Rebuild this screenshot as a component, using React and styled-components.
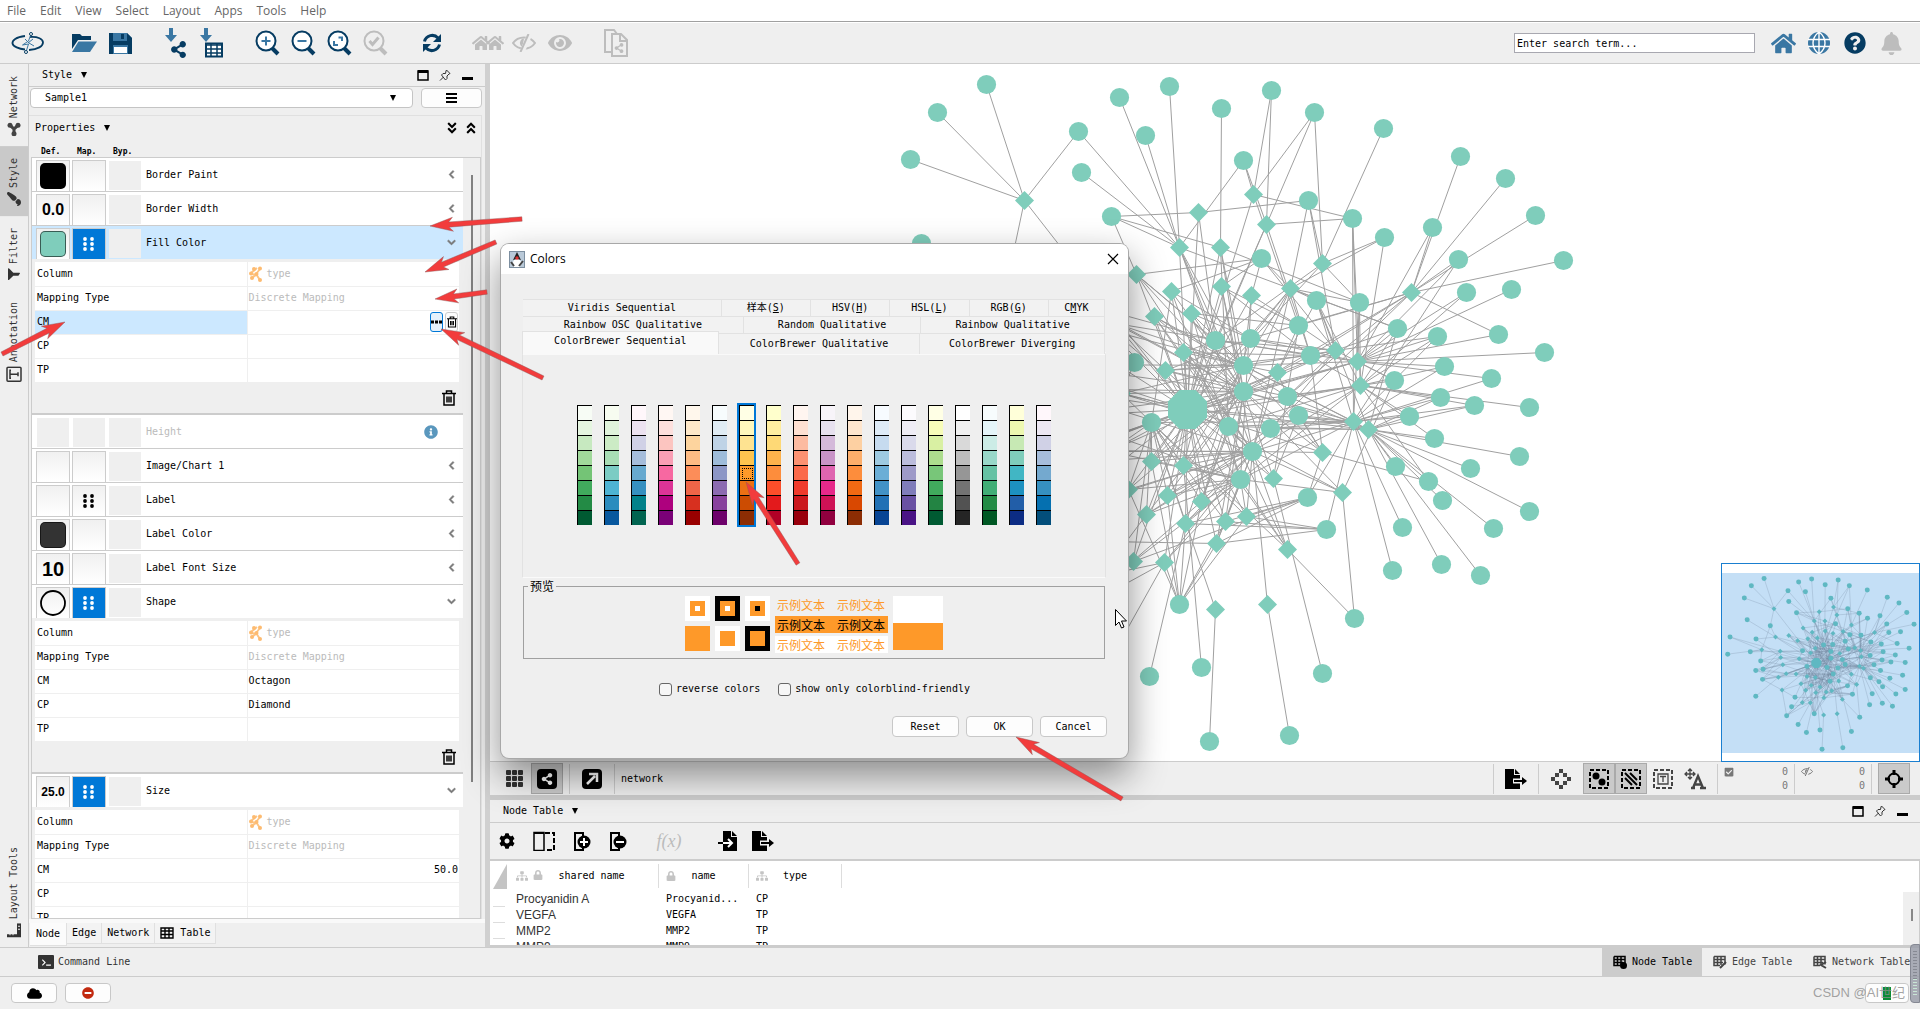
import React from "react";
import styled, { createGlobalStyle, css } from "styled-components";
import {
  FaShareAlt, FaHome, FaQuestionCircle, FaBell,
  FaEye, FaPaintBrush, FaFilter, FaCog, FaLock, FaSitemap, FaCloud, FaMinusCircle,
  FaInfoCircle, FaTerminal, FaCheckSquare, FaChevronLeft, FaChevronDown, FaAngleDoubleDown,
  FaAngleDoubleUp,
} from "react-icons/fa";

const mono = `"DejaVu Sans Mono", "Liberation Mono", "Noto Sans CJK SC", monospace`;
const sans = `"Open Sans", "Noto Sans", sans-serif`;
const cjk = `"Noto Sans CJK SC", sans-serif`;
const NAVY = "#063c62";
const STEEL = "#3a77a3";
const OFF = "#bdbdbd";
const TEAL = "#7fcdbb";
const ORANGE = "#fe9929";

const Global = createGlobalStyle`
  * { box-sizing: border-box; }
  body { margin: 0; overflow: hidden; background: #efefef; color: #000; font: 10px/14px ${mono}; }
  button, input, select { font: inherit; color: inherit; margin: 0; }
  button { padding: 0; border: 0; background: none; display: inline-flex; align-items: center; justify-content: center; }
  svg { display: block; flex: none; }
`;

/* ---------- network data ---------- */
const circles = [
  [986,84],[937,112],[910,159],[1078,131],[1119,97],[1169,86],[1145,135],[1081,172],[1221,108],[1271,90],
  [1314,112],[1383,128],[1243,160],[1111,216],[1308,200],[1352,218],[1460,156],[1505,178],[1535,215],[1563,260],
  [1432,227],[1384,237],[1261,258],[1458,259],[1511,289],[1466,292],[1316,300],[1359,302],[1298,325],[1250,338],
  [1215,340],[1397,328],[1437,336],[1498,334],[1544,352],[1310,355],[1243,365],[1444,366],[1491,378],[1394,380],
  [1134,362],[1243,391],[1287,396],[1440,397],[921,243],[1151,422],[1228,426],[1252,451],[1240,479],[1270,428],
  [1298,415],[1474,405],[1529,407],[1409,416],[1434,438],[1395,466],[1470,468],[1519,456],[1428,481],[1442,500],
  [1307,497],[1326,529],[1402,527],[1493,528],[1529,511],[1392,570],[1441,564],[1480,575],[1354,618],[1179,604],
  [1149,676],[1201,667],[1322,673],[1209,741],[1289,735],[855,309],[846,375],[933,366],[955,317],[1010,266],
  [973,401],[954,438],[982,433],[980,472],[954,537],[1105,541],[1092,577],[1073,612],[1117,646],
];
const diamonds = [
  [1024,200],[1198,212],[1253,194],[1266,224],[1179,247],[1220,247],[1136,274],[1171,291],[1221,286],[1251,295],
  [1290,288],[1322,263],[1411,292],[1154,316],[1191,313],[1183,352],[1165,370],[1335,350],[1357,361],[1360,385],
  [1277,372],[1353,421],[1368,429],[1322,452],[1342,492],[1273,478],[1151,461],[1183,465],[1167,495],[1146,514],
  [1201,501],[1185,523],[1225,521],[1246,516],[1216,543],[1164,562],[1133,561],[1287,549],[1215,609],[1267,604],
  [1128,489],[1030,309],[1081,303],[1115,323],[977,358],[1048,364],[1050,388],[1058,416],[1071,450],[1041,464],
  [1055,513],[1109,451],[1121,393],
];
const hub = [1187, 409];
const links = {
  0: [0,1,2,3,79], 1: [13,14,30], 2: [9,10,12,15,28], 3: [9,10,12,15,30,35],
  4: [3,4,5,6,7,12,13,31,36,41,47,30], 5: [8,13,27,36,41,46], 6: [13,22,36,41,30,47], 7: [29,41,22,48,45],
  8: [22,28,41,47,35], 9: [22,36,28,48], 10: [14,21,22,26,27,29,31,35,36,41,47], 11: [11,14,21,10,30,27],
  12: [16,17,18,19,20,23,33,28,29,35,41,42,49], 13: [36,42,47,41,46], 14: [28,36,41,48,29], 15: [30,36,41,35,49,47],
  16: [29,35,36,42,41], 17: [14,22,26,28,29,30,31,32,35,36,39,41,42,47], 18: [15,20,23,24,25,27,29,30,31,32,33,34,36,37,38,39,41,45],
  19: [15,21,25,26,27,31,32,37,39,43,45,46,47,48,51,52,53,54,58,35,42], 20: [26,28,42,36,47,35],
  21: [23,27,32,36,37,38,41,45,46,47,48,49,50,51,53,60,61,65,62,43,26,15],
  22: [26,36,41,43,46,49,51,53,54,55,56,57,58,59,63,64,66,67,31,42,50], 23: [35,36,41,42,47,58,60,50],
  24: [39,47,48,68,41], 25: [41,46,50,72,28], 26: [36,41,45,47,48,69], 27: [36,47,48,71,30,45],
  28: [41,47,48,69,45,49], 29: [41,47,48,45,87,50], 30: [36,41,45,47,48,69,46,87], 31: [45,47,48,69,70,60,61,29],
  32: [45,47,60,61,69,41], 33: [47,48,60,61,69,45], 34: [41,47,60,61,69,85,48], 35: [47,48,69,86,87,88],
  36: [48,60,45,87], 37: [45,47,48,68,46], 38: [73,45], 39: [74,47], 40: [41,47,48,69,45,85],
  41: [44,78,79,40,36], 42: [40,41,47,30], 43: [36,41,35,47], 44: [75,76,77,80,79], 45: [75,77,80,82,36,41,40],
  46: [80,81,82,83,41,47,78], 47: [80,81,82,83,41,48], 48: [81,82,83,41,47,45], 49: [81,83,84,47,45],
  50: [87,85,47,83], 51: [41,47,48,83,45], 52: [36,41,45,82,46,40],
};
const edges = [
  ...diamonds.filter((_, i) => i !== 12 && i !== 38 && i !== 39).map((d) => [hub, d]),
  ...Object.entries(links).flatMap(([d, list]) => list.map((c) => [diamonds[d], circles[c]])),
];

function Graph({ node = TEAL, edge = "#a0a0a0", thickness = 1 }) {
  return (
    <>
      <path d={edges.map(([a, b]) => `M${a}L${b}`).join("")} stroke={edge} strokeWidth={thickness} fill="none" />
      <g fill={node}>
        {circles.map(([x, y]) => <circle key={`${x}-${y}`} cx={x} cy={y} r="9.6" />)}
        {diamonds.map(([x, y]) => <path key={`${x}-${y}`} d={`M${x} ${y - 9.5}l9.5 9.5l-9.5 9.5l-9.5-9.5z`} />)}
        <path d="M1179 389.500h16l11.500 11.500v16l-11.500 11.500h-16l-11.500-11.500v-16z" />
      </g>
    </>
  );
}

/* ---------- icons ---------- */
const Svg = ({ w = 22, h = w, box = `0 0 ${w} ${h}`, children, ...p }) => (
  <svg width={w} height={h} viewBox={box} fill="none" aria-hidden="true" {...p}>{children}</svg>
);
const Caret = () => <Svg w={8} h={6}><path d="M1 0h6L4 6z" fill="#000" /></Svg>;
const Logo = () => (
  <Svg w={34} h={24}>
    <path d="M14 5C5 6 1 9.500 1.500 12.500S8 18 14 18.500M19 6c8-.5 13 2 13 5.500S27 18.500 18 19" stroke={NAVY} strokeWidth="1.8" />
    <path d="M20 3l-2.500 7-6 4 6-1-2.500 8M14 8l4 4 5 3M22 8l-5 4" stroke={STEEL} strokeWidth="1" />
    <circle cx="20" cy="3" r="1.500" stroke={NAVY} fill="#fff" /><circle cx="15" cy="21" r="1.500" stroke={NAVY} fill="#fff" />
  </Svg>
);
const Folder = () => (
  <Svg w={26} h={20}><path d="M1 1h8l2 2h9v4H7L1 16z" fill={NAVY} /><path d="M7.500 8.500H26L19 19H1z" fill={STEEL} /></Svg>
);
const Disk = () => (
  <Svg w={23} h={22}><path d="M0 1h18l5 5v16H0z" fill={STEEL} /><path d="M0 1h4v8h14V1l5 5v16h-4v-9H4v9H0z" fill={NAVY} />
    <path d="M12 2h3v5h-3z" fill={NAVY} /><path d="M5 15h13v6H5z" fill="#fff" /></Svg>
);
const Arrow = () => <path d="M5 1h4v7h4l-6 7-6-7h4z" fill={STEEL} />;
const ImportNet = () => (
  <Svg w={24} h={32}><Arrow /><g transform="translate(6 14)"><FaShareAlt size={17} color={NAVY} /></g></Svg>
);
const ImportTable = () => (
  <Svg w={26} h={32}><Arrow />
    <rect x="7" y="16.500" width="16" height="13" stroke={NAVY} strokeWidth="2" fill="#fff" />
    <path d="M7 18h16M7 22h16M7 26h16M12 17v12M18 17v12" stroke={NAVY} strokeWidth="1.500" />
  </Svg>
);
const Zoom = ({ kind, off }) => (
  <Svg w={26} h={26}>
    <path d="M17 18l6 6" stroke={off ? OFF : NAVY} strokeWidth="4" />
    <circle cx="11" cy="11" r="9.500" stroke={off ? OFF : NAVY} strokeWidth="2" fill={off ? "none" : "#fff"} />
    {kind === "in" && <path d="M11 6.500v9M6.500 11h9" stroke={STEEL} strokeWidth="2" />}
    {kind === "out" && <path d="M6.500 11h9" stroke={STEEL} strokeWidth="2" />}
    {kind === "fit" && <path d="M11.500 7.500H15V11M7 11v4h4" stroke={STEEL} strokeWidth="2" />}
    {kind === "sel" && <path d="M6.500 11l3 3.500 6-7" stroke={OFF} strokeWidth="3" />}
  </Svg>
);
const HiddenEye = ({ w = 24, color = OFF }) => (
  <Svg w={w} h={(w * 3) / 4} box="0 0 24 18">
    <path d="M1 9C6 1.500 18 1.500 23 9C18 16.500 6 16.500 1 9z" stroke={color} strokeWidth="2" />
    <path d="M12 4.500a4.500 4.500 0 0 0-1.500 8.500z" fill={color} />
    <path d="M18 0L10 18" stroke="#efefef" strokeWidth="5" /><path d="M16.500 0L8.500 18" stroke={color} strokeWidth="2" />
  </Svg>
);
const Refresh = () => (
  <Svg w={20} h={20}>
    <path d="M2.500 8.500C4 2 12 .5 16 5M17.500 11.500C16 18 8 19.500 4 15" stroke={NAVY} strokeWidth="3" />
    <path d="M19 1v8h-8zM1 19v-8h8z" fill={NAVY} />
  </Svg>
);
const Homes = () => (
  <Svg w={32} h={18}><FaHome size={18} color={OFF} /><g transform="translate(14 0)"><FaHome size={18} color={OFF} /></g></Svg>
);
const Pages = () => (
  <Svg w={26} h={30}>
    <path d="M8 24H2V2h9l3 4" stroke={OFF} strokeWidth="2" />
    <path d="M9 6h9l6 6v16H9zM17 6v7h7" stroke={OFF} strokeWidth="2" fill="#efefef" />
    <g transform="translate(11 15)"><FaShareAlt size={10} color={OFF} /></g>
  </Svg>
);
const Globe = () => (
  <Svg w={22}><circle cx="11" cy="11" r="11" fill={STEEL} />
    <path d="M11 0v22M0 7.500h22M0 14.500h22M11 0C3 6 3 16 11 22M11 0c8 6 8 16 0 22" stroke="#fff" strokeWidth="1.400" /></Svg>
);
const Maximize = () => <Svg w={12}><path d="M1 2h10v9H1z" stroke="#000" strokeWidth="1.500" /><path d="M1 1h10v3H1z" fill="#000" /></Svg>;
const Pin = () => <Svg w={12}><path d="M7.500 1l3.500 3.500-1 .5-2 2v2.500L6.500 11 2.500 6 4 4.500h2.500L7 2zM4.500 8L1 11.500" stroke="#333" /></Svg>;
const Minimize = () => <Svg w={12}><path d="M1 8h11v3H1z" fill="#000" /></Svg>;
const Burger = () => <Svg w={12} h={10}><path d="M0 1h11M0 5h11M0 9h11" stroke="#000" strokeWidth="2" /></Svg>;
const Dots = ({ color = "#000" }) => (
  <Svg w={12} h={14}>{[2, 7, 12].map((y) => [2, 9].map((x) => <circle key={`${x}${y}`} cx={x} cy={y} r="1.900" fill={color} />))}</Svg>
);
const Trash = ({ s = 14 }) => (
  <Svg w={s} h={s + 2} box="0 0 14 16"><path d="M0 3.500h14M4.500 3V1h5v2M2 4v11h10V4M5 6.500v6M7 6.500v6M9 6.500v6" stroke="#000" strokeWidth="1.500" /></Svg>
);
const Molecule = () => (
  <Svg w={14} h={16}><path d="M2 7l6-5M2 8l6 1M7 8l4-5M7 8l4 6M3 12l5-4" stroke="#fdc483" strokeWidth="2" />
    {[[2, 7.5], [7.5, 8], [11, 2.5], [3, 12], [11, 14], [5, 3]].map(([x, y]) => <circle key={`${x}${y}`} cx={x} cy={y} r="2" fill="#fdbb71" />)}</Svg>
);
const Grid9 = () => <Svg w={18}>{[0, 6, 12].map((y) => [0, 6, 12].map((x) => <rect key={`${x}${y}`} x={x} y={y} width="5" height="5" rx="1" fill="#333" />))}</Svg>;
const GridTable = () => <Svg w={14} h={12}><path d="M1 1h12v10H1zM1 4h12M1 7.500h12M5 1v10M9 1v10" stroke="#000" strokeWidth="1.400" /></Svg>;
const BlackTile = ({ children }) => <Svg w={20}><rect width="20" height="20" rx="4" fill="#000" />{children}</Svg>;
const FileOut = () => (
  <Svg w={24} h={20}><path d="M1 0h9v6h6v14H1zM11 0l5 5h-5z" fill="#000" /><path d="M9 12h10" stroke="#efefef" strokeWidth="5" /><path d="M10 12h9" stroke="#000" strokeWidth="2" /><path d="M18 8l5 4-5 4z" fill="#000" /></Svg>
);
const FileIn = () => (
  <Svg w={20} h={20}><path d="M5 0h8v6h6v14H5zM14 0l5 5h-5z" fill="#000" /><path d="M0 12h5" stroke="#000" strokeWidth="2" /><path d="M5 12h8M10 8l4 4-4 4" stroke="#fff" strokeWidth="2" /></Svg>
);
const Diamonds = () => (
  <Svg w={20}>{[[8, 0], [12, 4], [16, 8], [12, 12], [8, 16], [4, 12], [0, 8], [4, 4]].map(([x, y]) => <rect key={`${x}-${y}`} x={x} y={y} width="4" height="4" fill="#444" />)}</Svg>
);
const Dashed = ({ color = "#000", children }) => <Svg w={22}><rect x="2" y="2" width="18" height="18" stroke={color} strokeWidth="2" strokeDasharray="4 2" />{children}</Svg>;
const MoveA = () => (
  <Svg w={22}><path d="M6 1v10M1 6h10M4 3l2-2 2 2M4 9l2 2 2-2M3 4L1 6l2 2M9 4l2 2-2 2" stroke="#444" strokeWidth="1.300" />
    <path d="M9 20l5-12 5 12M10.500 16.500h7M7 20h4M16 20h6" stroke="#444" strokeWidth="2.400" /></Svg>
);
const Target = () => <Svg w={18}><circle cx="9" cy="9" r="5.500" stroke="#000" strokeWidth="2" /><path d="M9 0v5M9 13v5M0 9h5M13 9h5" stroke="#000" strokeWidth="3" /></Svg>;
const ColumnsIcon = () => <Svg w={22} h={20}><path d="M1 1.500h10v18H1z" stroke="#000" strokeWidth="1.500" /><path d="M1 1h10v2H1z" fill="#000" /><path d="M12 2h9v17h-9" stroke="#000" strokeWidth="2" strokeDasharray="5 2" /></Svg>;
const ColumnEdit = ({ plus }) => (
  <Svg w={18} h={20}><path d="M10 5V2H2v17h8v-3" stroke="#000" strokeWidth="2" /><circle cx="11" cy="11" r="6.500" fill="#000" />
    <path d={plus ? "M11 7v8M7 11h8" : "M7 11h8"} stroke="#fff" strokeWidth="2" /></Svg>
);
const SideTable = ({ kind, color }) => (
  <Svg w={16} h={15}><path d="M1 1.500h11v8M1 1.500v9h6M1 4.500h11M1 7.500h9M4.500 2v8M8 2v8" stroke={color} strokeWidth="1.500" />
    {kind === "node" && <circle cx="10.500" cy="10.500" r="3.500" fill={color} />}
    {kind === "edge" && <path d="M7 13l6-6" stroke={color} strokeWidth="2" />}
    {kind === "net" && <path d="M13 7l-5 3 5 3" stroke={color} strokeWidth="2" />}</Svg>
);
const Ruler = () => <Svg w={14}><path d="M12 0v13H0" stroke="#333" strokeWidth="4" /><path d="M3 12v-2M6 12v-2M11 3h2M11 6h2" stroke="#efefef" /></Svg>;
const TextBox = () => <Svg w={16}><rect x="1" y="1" width="14" height="14" rx="1" stroke="#333" strokeWidth="1.500" /><path d="M4 5V4h8v1M8 4v8M6 12h4" stroke="#333" strokeWidth="1.500" /></Svg>;
const NetGlyph = () => <Svg w={14}><path d="M3 3l4 4 4-4M7 7v5" stroke="#444" strokeWidth="3" /><circle cx="3" cy="3" r="2.500" fill="#444" /><circle cx="11" cy="3" r="2.500" fill="#444" /><circle cx="7" cy="11.500" r="2.500" fill="#444" /></Svg>;
const Duke = () => (
  <Svg w={16} h={17}><rect x=".5" y=".5" width="15" height="16" fill="#b9c9d8" stroke="#7d8fa0" /><path d="M8 4l4 7-1 5H5l-1-5z" fill="#fff" /><path d="M8 1l4 8-4-1-4 1z" fill="#222" /><path d="M2 11l3 4M14 10l-4 5" stroke="#444" strokeWidth="2" /><circle cx="8" cy="7" r="1.700" fill="#d33" /></Svg>
);

/* ---------- shell ---------- */
const Shell = styled.div`position: relative; display: flex; flex-direction: column; height: 100vh; overflow: hidden;`;
const MenuBar = styled.nav`
  display: flex; height: 23px; flex: none; background: #fff; border-bottom: 1px solid #fff;
  box-shadow: inset 0 -1px #a0a0a0; color: #666; font: 12px/22px ${sans};
  button { padding: 0 7px; align-items: flex-start; }
`;
const ToolBar = styled.header`
  display: flex; align-items: center; gap: 20px; height: 41px; flex: none; padding: 0 11px 0 10px; border-bottom: 1px solid #ccc;
`;
const ToolGroup = styled.div`display: flex;`;
const Tool = styled.button`width: 36px; height: 36px;`;
const SearchArea = styled.div`margin-left: auto; display: flex; align-items: center; gap: 10px;`;
const Search = styled.input`width: 241px; height: 20px; padding: 0 2px; border: 1px solid #a8a8b0; background: #fff; outline: 0;
  &::placeholder { color: #000; opacity: 1; }`;
const Workspace = styled.div`display: flex; flex: 1; min-height: 0;`;

const SideStrip = styled.nav`display: flex; flex-direction: column; width: 29px; flex: none; border-right: 1px solid #ccc;`;
const SideTab = styled.button`
  width: 28px; padding: 10px 0 12px; gap: 4px; writing-mode: vertical-rl; transform: rotate(180deg); color: #333;
  background: ${(p) => (p.$on ? "#c9c9c9" : "none")};
  ${(p) => p.$last && css`margin-top: auto;`}
  svg { transform: rotate(${(p) => (p.$turn ? 90 : 180)}deg); }
`;

const StylePanel = styled.section`display: flex; flex-direction: column; width: 456px; flex: none;`;
const PaneTitle = styled.header`
  display: flex; align-items: center; gap: 8px; height: 23px; flex: none; padding: 0 12px 0 13px; border-bottom: 1px solid #ccc;
`;
const WindowTools = styled.div`display: flex; gap: 10px; margin-left: auto;`;
const ComboRow = styled.div`display: flex; gap: 8px; padding: 1px 3px 7px 1px;`;
const ComboBox = styled.div`
  flex: 1; position: relative; height: 20px;
  select { width: 100%; height: 100%; padding: 0 14px; appearance: none; background: #fff; border: 1px solid #c4c4c4; border-radius: 4px; }
  svg { position: absolute; right: 16px; top: 7px; pointer-events: none; }
`;
const BoxButton = styled.button`
  width: ${(p) => p.$w}px; height: ${(p) => p.$h || 20}px; background: #fdfdfd; border: 1px solid #c8c8c8; border-radius: 4px;
`;
const Props = styled.div`display: flex; flex-direction: column; flex: 1; min-height: 0; margin-right: 3px; border: solid #e0e0e0; border-width: 1px 1px 0 0;`;
const PropsHead = styled.div`display: flex; align-items: center; gap: 8px; height: 24px; padding: 0 3px 0 6px; flex: none;`;
const Expanders = styled.div`margin-left: auto; display: flex; gap: 5px;`;
const ColumnLabels = styled.div`
  display: flex; height: 17px; flex: none; align-items: center; padding: 6px 0 0 12px; font-size: 8px; font-weight: bold;
  span { width: 36px; }
`;
const ListBox = styled.div`display: flex; flex: 1; min-height: 0; margin-left: 2px; border: 1px solid #ccc; overflow: hidden;`;
const Rows = styled.div`flex: 1; min-width: 0;`;
const ScrollTrack = styled.div`width: 17px; padding: 17px 7px 136px 8px; display: flex;
  &::before { content: ""; flex: 1; background: #808080; }`;
const Row = styled.div`
  display: flex; align-items: center; height: ${(p) => (p.$open ? 33 : 34)}px; padding: 0 6px 0 4px;
  background: ${(p) => (p.$sel ? "#cce8ff" : "#fff")}; border-bottom: ${(p) => (p.$open ? 0 : 1)}px solid #ccc;
`;
const Cells = styled.div`display: flex; gap: 2px; align-self: flex-end;`;
const Cell = styled.button`
  width: 34px; height: 31px; border: 1px solid #ccc; border-bottom: 0; background: linear-gradient(#f0f0f0, #fff);
  font: bold ${(p) => p.$size || 12}px/20px "Liberation Sans", Arial, sans-serif;
  ${(p) => p.$flat && css`background: #efefef; border: 1px solid ${p.$sel ? "#cce8ff" : "#fff"};`}
  ${(p) => p.$mapped && css`background: #0078d7;`}
`;
const Swatch = styled.span`width: 26px; height: 26px; border-radius: 5px; background: ${(p) => p.$c}; border: 1px solid rgba(0,0,0,.55);`;
const RowName = styled.span`flex: 1; padding-left: 4px; color: ${(p) => (p.$off ? "#bbb" : "#000")};`;
const RowEnd = styled.button`width: 12px; height: 16px; margin-right: ${(p) => (p.$info ? "20px" : "0")}; color: #777;`;
const Expanded = styled.div`height: 156px; padding: 3px 3px 0; border-bottom: 2px solid #ccc; background: #efefef;`;
const MapTable = styled.table`
  width: 424px; border-collapse: collapse; table-layout: fixed;
  th, td { height: 24px; padding: 0 1px; text-align: left; font-weight: normal; background: #fff; border-bottom: 1px solid #efefef; }
  th { border-right: 1px solid #efefef; padding: 0 2px; }
`;
const Head = styled.th`&& { background: ${(p) => (p.$sel ? "#cce8ff" : "#fff")}; }`;
const Value = styled.div`display: flex; align-items: center; height: 22px; gap: 2px; color: ${(p) => (p.$dim ? "#bbb" : "#000")};
  ${(p) => p.$dim && css`gap: 4px;`}
  ${(p) => p.$end && css`justify-content: flex-end;`}`;
const MiniButton = styled.button`width: 13px; height: 20px; border: 1px solid ${(p) => (p.$on ? "#0078d7" : "#ccc")}; border-radius: 3px; background: ${(p) => (p.$on ? "#e5f1fb" : "#fdfdfd")};`;
const TrashBar = styled.div`display: flex; justify-content: flex-end; padding: 7px 4px;`;
const KindTabs = styled.div`display: flex; align-items: flex-start; height: 28px; flex: none; padding: 4px 0 0 1px; box-shadow: inset 0 4px #f9f9f9;`;
const KindTab = styled.button`
  height: ${(p) => (p.$on ? 23 : 21)}px; padding: 0 ${(p) => (p.$on ? 6 : 5)}px; gap: 6px;
  background: ${(p) => (p.$on ? "#fbfbfb" : "#f3f3f3")}; border-right: 1px solid #e0e0e0; border-bottom: 1px solid #e0e0e0;
`;
const Splitter = styled.div`width: 5px; flex: none; background: #d0d0d0;`;

/* ---------- main column ---------- */
const Main = styled.main`display: flex; flex-direction: column; flex: 1; min-width: 0;`;
const Canvas = styled.div`flex: 1; min-height: 0; background: #fff; overflow: hidden;`;
const FootBar = styled.div`display: flex; align-items: center; height: 34px; flex: none; padding: 0 10px 0 9px; border-top: 1px solid #ccc;`;
const FootTool = styled.button`width: 32px; height: 31px; border: 1px solid ${(p) => (p.$on ? "#aaa" : "transparent")}; background: ${(p) => (p.$on ? "#cacaca" : "none")};`;
const Sep = styled.span`width: 1px; height: 30px; margin: 0 6px; background: #ccc;`;
const Gap = styled.span`flex: ${(p) => (p.$w ? "none" : 1)}; width: ${(p) => p.$w || 0}px;`;
const Counts = styled.div`display: grid; grid-template-columns: 1fr auto; width: 64px; color: #777; line-height: 14px; align-items: center;`;
const HSplit = styled.div`height: 5px; flex: none; background: #ccc;`;
const TableTools = styled.div`display: flex; align-items: center; height: 38px; flex: none; padding-left: 7px; border-bottom: 2px solid #ccc;`;
const TableTool = styled.button`height: 30px; width: ${(p) => p.$w}px;`;
const Fx = styled.button`width: 62px; color: #bbb; font: italic 18px/24px "Liberation Serif", serif;`;
const TableArea = styled.div`display: flex; height: 86px; flex: none; background: #fff; border-bottom: 2px solid #ccc; border-right: 1px solid #ccc; overflow: hidden;`;
const Corner = styled.div`
  width: 19px; flex: none; padding: 3px 3px 0; display: flex; flex-direction: column;
  i { height: 16px; width: 12px; border-bottom: 1px solid #ddd; }
  svg { margin-bottom: 2px; }
`;
const DataTable = styled.table`
  border-collapse: collapse; table-layout: fixed; width: 333px; height: max-content;
  th { height: 30px; padding: 0; font-weight: normal; }
  td { height: 16px; padding: 0 7px; white-space: nowrap; }
  td:first-child { font: 12px/16px "Liberation Sans", Arial, sans-serif; color: #333; }
`;
const ColHead = styled.div`
  position: relative; display: flex; align-items: center; justify-content: center; height: 24px; border-right: 1px solid #ddd;
  span { display: flex; gap: 5px; position: absolute; left: 7px; color: #c4c4c4; }
  b { font-weight: normal; padding-left: ${(p) => p.$pad}px; }
`;
const SideScroll = styled.div`width: 16px; height: 54px; margin: 31px 0 0 auto; padding: 17px 6px 25px 8px; background: #efefef; display: flex;
  &::before { content: ""; flex: 1; background: #888; }`;

/* ---------- bird's eye view ---------- */
const Overview = styled.div`
  position: absolute; right: 0; bottom: 247px; width: 199px; height: 199px; background: #fff; border: 1px solid #1a7fd0;
  display: flex; align-items: center;
`;
const Lens = styled.div`flex: 1; height: 180px; background: #c4dff6;`;

/* ---------- bottom ---------- */
const DockBar = styled.div`display: flex; height: 30px; flex: none; border: solid #ccc; border-width: 1px 0;`;
const CommandLine = styled.button`gap: 4px; padding-left: 38px; color: #333;`;
const TermIcon = styled.span`width: 16px; height: 14px; border-radius: 1px; background: #333; color: #fff; display: grid; place-items: center;`;
const DockTabs = styled.div`display: flex; margin-left: auto;`;
const DockTab = styled.button`width: ${(p) => p.$w || 100}px; gap: 3px; padding-left: 11px; justify-content: flex-start; color: ${(p) => (p.$on ? "#000" : "#444")}; background: ${(p) => (p.$on ? "#ccc" : "none")};`;
const StatusBar = styled.footer`display: flex; align-items: flex-start; gap: 8px; height: 32px; flex: none; padding: 6px 11px;`;
const Memory = styled(BoxButton)`margin-left: auto; i { width: 8px; height: 13px; background: #0b8a35; }`;
const Watermark = styled.div`position: absolute; right: 15px; bottom: 6px; color: #8c8c8ccc; font: 13px/20px "Liberation Sans", ${cjk};`;
const Meter = styled.div`position: absolute; right: 0; bottom: 6px; width: 10px; height: 59px; padding: 6px 2px; border-radius: 4px 0 0 4px; background: #969aa6cc; border: 1px solid #858893;
  &::before { content: ""; display: block; height: 28px; background: repeating-linear-gradient(#868993 0 1px, transparent 1px 3px); }
  &::after { content: ""; display: block; height: 17px; background: repeating-linear-gradient(#c9e6d6 0 1px, transparent 1px 3px); }`;

/* ---------- dialog ---------- */
const Dialog = styled.section`
  position: absolute; left: 501px; top: 244px; width: 627px; height: 514px; background: #efefef; border-radius: 8px;
  box-shadow: 0 0 0 1px #a8a8a8, 0 16px 36px 2px rgba(0,0,0,.42);
`;
const TitleBar = styled.header`
  display: flex; align-items: center; gap: 5px; height: 30px; padding: 0 8px; background: #fff; border-radius: 8px 8px 0 0; font: 12px/18px ${sans};
  button { margin-left: auto; width: 14px; height: 14px; }
`;
const DialogBody = styled.div`padding: 25px 21px 0;`;
const TabRow = styled.div`
  display: grid; grid-template-columns: ${(p) => p.$cols}; height: ${(p) => p.$h || 17}px; margin: 0 2px 0 1px;
`;
const ColorTab = styled.button`
  background: #f2f2f2; border: solid #e2e2e2; border-width: 1px 1px 0 0; font-family: ${mono};
  ${(p) => p.$on && css`background: #f9f9f9; margin: -2px 0 0 -1px; border-left-width: 1px; height: 23px; padding-bottom: 4px; z-index: 1;`}
`;
const ColorPanel = styled.div`display: flex; justify-content: center; gap: 8px; height: 226px; margin-right: 1px; padding-top: 48px; border: 1px solid #e2e2e2; border-top: 3px solid #f9f9f9; border-bottom-color: #fafafa;`;
const Ramp = styled.div`
  display: flex; flex-direction: column; height: 124px; padding: 2px; outline-offset: -2px; outline: ${(p) => (p.$on ? "2px solid #0078d7" : "none")};
`;
const Chip = styled.button`
  width: 15px; height: 15px; background: ${(p) => p.$c}; border: solid #000; border-width: 1px 0 0 1px;
  ${(p) => p.$on && css`&::before { content: ""; width: 9px; height: 9px; border: 1px dotted #000; }`}
`;
const Preview = styled.fieldset`
  display: flex; justify-content: center; gap: 5px; height: 80px; margin: 1px 2px 0 1px; padding: 3px 0 0; border: 1px solid #a0a0a0; min-width: 0;
  legend { margin-left: 4px; padding: 0 2px; font: 12px/14px ${cjk}; }
`;
const Tiles = styled.div`display: grid; grid-template-columns: repeat(3, 25px); gap: 5px; align-content: start;`;
const Tile = styled.span`
  width: 25px; height: 25px; background: ${(p) => p.$a}; display: grid; place-items: center;
  &::before { content: ""; grid-area: 1/1; width: 15px; height: 15px; background: ${ORANGE}; }
  &::after { content: ""; grid-area: 1/1; width: 5px; height: 5px; background: ${(p) => p.$b || ORANGE}; }
`;
const Samples = styled.div`display: grid; gap: 3px; width: 113px; align-content: start;`;
const Sample = styled.div`display: flex; gap: 12px; height: 17px; padding-left: 2px; font: 12px/17px ${cjk}; color: ${(p) => p.$c}; background: ${(p) => p.$bg};`;
const Block = styled.span`width: 50px; height: 54px; background: linear-gradient(#fff 50%, ${ORANGE} 50%);`;
const Checks = styled.div`
  display: flex; justify-content: center; gap: 18px; margin: 23px 0 20px;
  label { display: flex; align-items: center; gap: 4px; }
  input { appearance: none; width: 13px; height: 13px; border: 1px solid #666; border-radius: 3px; background: #f6f6f6; }
`;
const Actions = styled.div`display: flex; justify-content: flex-end; gap: 7px;`;

/* ---------- overlay ---------- */
const Overlay = styled.svg`position: absolute; inset: 0; width: 100%; height: 100%; pointer-events: none;`;

const ramps = [
  "f7fcf5,e5f5e0,c7e9c0,a1d99b,74c476,41ab5d,238b45,005a32",
  "f7fcf0,e0f3db,ccebc5,a8ddb5,7bccc4,4eb3d3,2b8cbe,08589e",
  "fff7fb,ece2f0,d0d1e6,a6bddb,67a9cf,3690c0,02818a,016450",
  "fff7f3,fde0dd,fcc5c0,fa9fb5,f768a1,dd3497,ae017e,7a0177",
  "fff7ec,fee8c8,fdd49e,fdbb84,fc8d59,ef6548,d7301f,990000",
  "f7fcfd,e0ecf4,bfd3e6,9ebcda,8c96c6,8c6bb1,88419d,6e016b",
  "ffffe5,fff7bc,fee391,fec44f,fe9929,ec7014,cc4c02,8c2d04",
  "ffffcc,ffeda0,fed976,feb24c,fd8d3c,fc4e2a,e31a1c,b10026",
  "fff5f0,fee0d2,fcbba1,fc9272,fb6a4a,ef3b2c,cb181d,99000d",
  "f7f4f9,e7e1ef,d4b9da,c994c7,df65b0,e7298a,ce1256,91003f",
  "fff5eb,fee6ce,fdd0a2,fdae6b,fd8d3c,f16913,d94801,8c2d04",
  "f7fbff,deebf7,c6dbef,9ecae1,6baed6,4292c6,2171b5,084594",
  "fcfbfd,efedf5,dadaeb,bcbddc,9e9ac8,807dba,6a51a3,4a1486",
  "ffffe5,f7fcb9,d9f0a3,addd8e,78c679,41ab5d,238443,005a32",
  "ffffff,f0f0f0,d9d9d9,bdbdbd,969696,737373,525252,252525",
  "f7fcfd,e5f5f9,ccece6,99d8c9,66c2a4,41ae76,238b45,005824",
  "ffffd9,edf8b1,c7e9b4,7fcdbb,41b6c4,1d91c0,225ea8,0c2c84",
  "fff7fb,ece7f2,d0d1e6,a6bddb,74a9cf,3690c0,0570b0,034e7b",
].map((r) => r.split(",").map((c) => `#${c}`));

const pointers = [
  [522, 219, 430, 226], [496, 242, 425, 272], [487, 292, 435, 299], [543, 378, 441, 329],
  [2, 354, 65, 322], [798, 564, 746, 482], [1122, 799, 1016, 737],
];

function Pointer({ at: [x1, y1, x2, y2] }) {
  const len = Math.hypot(x2 - x1, y2 - y1);
  const angle = (Math.atan2(y2 - y1, x2 - x1) * 180) / Math.PI;
  return (
    <path
      transform={`translate(${x1} ${y1}) rotate(${angle})`}
      d={`M0-2.200L${len - 19}-2.600L${len - 23}-7L${len} 0L${len - 23} 7L${len - 19} 2.600L0 2.200z`}
    />
  );
}

const PaneTools = () => (
  <WindowTools>
    <button aria-label="Maximize"><Maximize /></button>
    <button aria-label="Pin"><Pin /></button>
    <button aria-label="Minimize"><Minimize /></button>
  </WindowTools>
);

function Property({ name, def, size, map, mapped, off, info, sel, rows, selectedRow }) {
  const Chevron = rows ? FaChevronDown : FaChevronLeft;
  return (
    <>
      <Row $open={!!rows} $sel={sel}>
        <Cells>
          <Cell aria-label={`${name} default`} $size={size} $flat={off}>{def}</Cell>
          <Cell aria-label={`${name} mapping`} $flat={off} $mapped={mapped}>
            {mapped ? <Dots color="#fff" /> : map ? <Dots /> : null}
          </Cell>
          <Cell aria-label={`${name} bypass`} $flat $sel={sel} />
        </Cells>
        <RowName $off={off}>{name}</RowName>
        <RowEnd aria-label={`${name} details`} $info={info}>
          {info ? <FaInfoCircle size={14} color="#5a97bd" /> : <Chevron size={9} stroke="currentColor" strokeWidth={40} />}
        </RowEnd>
      </Row>
      {rows && (
        <Expanded>
          <MapTable>
            <tbody>
              <tr><th>Column</th><td><Value $dim><Molecule />type</Value></td></tr>
              <tr><th>Mapping Type</th><td><Value $dim>Discrete Mapping</Value></td></tr>
              {["CM", "CP", "TP"].map((k, i) => (
                <tr key={k}>
                  <Head $sel={selectedRow === k}>{k}</Head>
                  <td>
                    {selectedRow === k ? (
                      <Value $end>
                        <MiniButton $on aria-label="Edit value"><Svg w={11} h={4}><path d="M0 2h3M4 2h3M8 2h3" stroke="#000" strokeWidth="3" /></Svg></MiniButton>
                        <MiniButton aria-label="Remove value"><Trash s={10} /></MiniButton>
                      </Value>
                    ) : <Value $end={/\d/.test(rows[i])}>{rows[i]}</Value>}
                  </td>
                </tr>
              ))}
            </tbody>
          </MapTable>
          <TrashBar><button aria-label={`Remove ${name} mapping`}><Trash /></button></TrashBar>
        </Expanded>
      )}
    </>
  );
}

const Key = ({ pre, k, post }) => <span>{pre}<u>{k}</u>{post}</span>;

function ColorsDialog() {
  return (
    <Dialog role="dialog" aria-label="Colors">
      <TitleBar><Duke />Colors<button aria-label="Close"><Svg w={12}><path d="M1 1l10 10M11 1L1 11" stroke="#000" strokeWidth="1.200" /></Svg></button></TitleBar>
      <DialogBody>
        <TabRow $cols="198fr 89fr 79fr 79fr 79fr 56fr">
          <ColorTab>Viridis Sequential</ColorTab>
          <ColorTab><Key pre="样本(" k="S" post=")" /></ColorTab>
          <ColorTab><Key pre="HSV(" k="H" post=")" /></ColorTab>
          <ColorTab><Key pre="HSL(" k="L" post=")" /></ColorTab>
          <ColorTab><Key pre="RGB(" k="G" post=")" /></ColorTab>
          <ColorTab><Key pre="C" k="M" post="YK" /></ColorTab>
        </TabRow>
        <TabRow $cols="220fr 177fr 183fr">
          <ColorTab>Rainbow OSC Qualitative</ColorTab><ColorTab>Random Qualitative</ColorTab><ColorTab>Rainbow Qualitative</ColorTab>
        </TabRow>
        <TabRow $cols="195fr 201fr 184fr" $h={19}>
          <ColorTab $on>ColorBrewer Sequential</ColorTab><ColorTab>ColorBrewer Qualitative</ColorTab><ColorTab>ColorBrewer Diverging</ColorTab>
        </TabRow>
        <ColorPanel>
          {ramps.map((r, i) => (
            <Ramp key={i} $on={i === 6}>{r.map((c, j) => <Chip key={j} $c={c} $on={i === 6 && j === 4} aria-label={c} />)}</Ramp>
          ))}
        </ColorPanel>
        <Preview>
          <legend>预览</legend>
          <Tiles>
            <Tile $a="#fff" $b="#fff" /><Tile $a="#000" $b="#fff" /><Tile $a="#fff" $b="#000" />
            <Tile $a={ORANGE} /><Tile $a="#fff" /><Tile $a="#000" />
          </Tiles>
          <Samples>
            {[[ORANGE, "none"], ["#000", ORANGE], [ORANGE, "#fff"]].map(([c, bg], i) => (
              <Sample key={i} $c={c} $bg={bg}><span>示例文本</span><span>示例文本</span></Sample>
            ))}
          </Samples>
          <Block />
        </Preview>
        <Checks>
          <label><input type="checkbox" />reverse colors</label>
          <label><input type="checkbox" />show only colorblind-friendly</label>
        </Checks>
        <Actions>
          {["Reset", "OK", "Cancel"].map((t) => <BoxButton key={t} $w={67} $h={21}>{t}</BoxButton>)}
        </Actions>
      </DialogBody>
    </Dialog>
  );
}

const T = ({ label, children }) => <Tool aria-label={label}>{children}</Tool>;

export default function App() {
  return (
    <Shell>
      <Global />
      <MenuBar>{["File", "Edit", "View", "Select", "Layout", "Apps", "Tools", "Help"].map((m) => <button key={m}>{m}</button>)}</MenuBar>
      <ToolBar>
        <ToolGroup><T label="Cytoscape"><Logo /></T></ToolGroup>
        <ToolGroup><T label="Open"><Folder /></T><T label="Save"><Disk /></T></ToolGroup>
        <ToolGroup><T label="Import network"><ImportNet /></T><T label="Import table"><ImportTable /></T></ToolGroup>
        <ToolGroup>
          <T label="Zoom in"><Zoom kind="in" /></T><T label="Zoom out"><Zoom kind="out" /></T>
          <T label="Fit content"><Zoom kind="fit" /></T><T label="Fit selected"><Zoom kind="sel" off /></T>
        </ToolGroup>
        <ToolGroup><T label="Refresh"><Refresh /></T></ToolGroup>
        <ToolGroup><T label="First neighbors"><Homes /></T><T label="Hide"><HiddenEye /></T><T label="Show"><FaEye size={24} color={OFF} /></T></ToolGroup>
        <ToolGroup><T label="New network"><Pages /></T></ToolGroup>
        <SearchArea>
          <Search aria-label="Search" placeholder="Enter search term..." />
          <ToolGroup>
            <T label="Home"><FaHome size={25} color={STEEL} /></T><T label="Web"><Globe /></T>
            <T label="Help"><FaQuestionCircle size={22} color={NAVY} /></T><T label="Notifications"><FaBell size={23} color={OFF} /></T>
          </ToolGroup>
        </SearchArea>
      </ToolBar>

      <Workspace>
        <SideStrip>
          <SideTab $turn={false}><NetGlyph />Network</SideTab>
          <SideTab $on $turn><FaPaintBrush size={14} />Style</SideTab>
          <SideTab $turn><FaFilter size={12} />Filter</SideTab>
          <SideTab $turn><TextBox />Annotation</SideTab>
          <SideTab $last><Ruler />Layout Tools</SideTab>
        </SideStrip>

        <StylePanel>
          <PaneTitle>Style<Caret /><PaneTools /></PaneTitle>
          <ComboRow>
            <ComboBox><select aria-label="Current style" defaultValue="Sample1"><option>Sample1</option></select><Caret /></ComboBox>
            <BoxButton $w={61} aria-label="Options"><Burger /></BoxButton>
          </ComboRow>
          <Props>
            <PropsHead>Properties<Caret />
              <Expanders><button aria-label="Expand all"><FaAngleDoubleDown size={14} /></button><button aria-label="Collapse all"><FaAngleDoubleUp size={14} /></button></Expanders>
            </PropsHead>
            <ColumnLabels><span>Def.</span><span>Map.</span><span>Byp.</span></ColumnLabels>
            <ListBox>
              <Rows>
                <Property name="Border Paint" def={<Swatch $c="#000" />} />
                <Property name="Border Width" def="0.0" size={16} />
                <Property name="Fill Color" def={<Swatch $c={TEAL} />} mapped sel rows={["", "", ""]} selectedRow="CM" />
                <Property name="Height" off info />
                <Property name="Image/Chart 1" />
                <Property name="Label" map />
                <Property name="Label Color" def={<Swatch $c="#333" />} />
                <Property name="Label Font Size" def="10" size={20} />
                <Property name="Shape" def={<Svg w={26}><circle cx="13" cy="13" r="12" stroke="#000" strokeWidth="1.800" /></Svg>} mapped rows={["Octagon", "Diamond", ""]} />
                <Property name="Size" def="25.0" size={12} mapped rows={["50.0", "", ""]} />
              </Rows>
              <ScrollTrack />
            </ListBox>
          </Props>
          <KindTabs>
            <KindTab $on>Node</KindTab><KindTab>Edge</KindTab><KindTab>Network</KindTab><KindTab><GridTable />Table</KindTab>
          </KindTabs>
        </StylePanel>
        <Splitter />

        <Main>
          <Canvas>
            <svg width="1430" height="698" viewBox="489.5 63.5 1430 698"><Graph /></svg>
          </Canvas>
          <FootBar>
            <FootTool aria-label="Grid view"><Grid9 /></FootTool>
            <FootTool $on aria-label="Network view"><BlackTile><g transform="translate(4 4)"><FaShareAlt size={12} color="#fff" /></g></BlackTile></FootTool>
            <Sep />
            <FootTool aria-label="Detach view"><BlackTile><path d="M5 15L13 7M7 5h8v8" stroke="#fff" strokeWidth="2.500" /></BlackTile></FootTool>
            <Sep />
            network
            <Gap />
            <Sep />
            <FootTool aria-label="Export image"><FileOut /></FootTool>
            <Sep />
            <FootTool aria-label="Layout"><Diamonds /></FootTool>
            <Gap $w={6} />
            <FootTool $on aria-label="Select nodes"><Dashed><circle cx="8" cy="8" r="3.500" fill="#000" /><circle cx="14" cy="14" r="3.500" fill="#000" /></Dashed></FootTool>
            <FootTool $on aria-label="Select edges"><Dashed><path d="M5 5l12 12M10 5l7 7M5 10l7 7" stroke="#000" strokeWidth="2" /></Dashed></FootTool>
            <FootTool aria-label="Select annotations"><Dashed color="#444"><path d="M6 6h10v10H6zM8 8.500h6M11 8v6" stroke="#444" strokeWidth="1.300" /></Dashed></FootTool>
            <FootTool aria-label="Move labels"><MoveA /></FootTool>
            <Sep />
            <Counts><FaCheckSquare size={10} /><span>0</span><span /><span>0</span></Counts>
            <Sep />
            <Counts><HiddenEye w={12} color="#777" /><span>0</span><span /><span>0</span></Counts>
            <Sep />
            <FootTool $on aria-label="Bird's eye view"><Target /></FootTool>
          </FootBar>
          <HSplit />
          <PaneTitle>Node Table<Caret /><PaneTools /></PaneTitle>
          <TableTools>
            <TableTool $w={20} aria-label="Settings"><FaCog size={16} /></TableTool>
            <TableTool $w={53} aria-label="Columns"><ColumnsIcon /></TableTool>
            <TableTool $w={24} aria-label="Add column"><ColumnEdit plus /></TableTool>
            <Gap $w={10} />
            <TableTool $w={28} aria-label="Remove column"><ColumnEdit /></TableTool>
            <Gap $w={6} />
            <Fx>f(x)</Fx>
            <Gap $w={17} />
            <TableTool $w={22} aria-label="Import"><FileIn /></TableTool>
            <Gap $w={11} />
            <TableTool $w={26} aria-label="Export"><FileOut /></TableTool>
          </TableTools>
          <TableArea>
            <Corner><Svg w={14} h={25}><path d="M14 0v25H0z" fill="#c4c4c4" /></Svg><i /><i /><i /></Corner>
            <DataTable>
              <colgroup><col width="150" /><col width="90" /><col width="93" /></colgroup>
              <thead>
                <tr>
                  <th><ColHead $pad={16}><span><FaSitemap size={12} /><FaLock size={10} /></span><b>shared name</b></ColHead></th>
                  <th><ColHead $pad={0}><span><FaLock size={10} /></span><b>name</b></ColHead></th>
                  <th><ColHead $pad={0}><span><FaSitemap size={12} /></span><b>type</b></ColHead></th>
                </tr>
              </thead>
              <tbody>
                {[["Procyanidin A", "Procyanid...", "CP"], ["VEGFA", "VEGFA", "TP"], ["MMP2", "MMP2", "TP"], ["MMP9", "MMP9", "TP"]].map((r) => (
                  <tr key={r[0]}>{r.map((c, i) => <td key={i}>{c}</td>)}</tr>
                ))}
              </tbody>
            </DataTable>
            <SideScroll />
          </TableArea>
        </Main>
      </Workspace>

      <DockBar>
        <CommandLine><TermIcon><FaTerminal size={9} /></TermIcon>Command Line</CommandLine>
        <DockTabs>
          <DockTab $on><SideTable kind="node" color="#000" />Node Table</DockTab>
          <DockTab><SideTable kind="edge" color="#444" />Edge Table</DockTab>
          <DockTab $w={118}><SideTable kind="net" color="#444" />Network Table</DockTab>
        </DockTabs>
      </DockBar>
      <StatusBar>
        <BoxButton $w={46} aria-label="Cloud"><FaCloud size={15} /></BoxButton>
        <BoxButton $w={46} aria-label="Stop"><FaMinusCircle size={12} color="#c22a10" /></BoxButton>
        <Memory $w={44} aria-label="Memory"><i /></Memory>
      </StatusBar>

      <Overview>
        <Lens><svg width="197" height="180" viewBox="824 63 758 692"><Graph node="#5fb8c2" edge="rgba(110,130,155,.32)" thickness={3} /></svg></Lens>
      </Overview>
      <ColorsDialog />
      <Overlay>
        <g fill="#f23c3c" stroke="#8a5a5a" strokeOpacity=".5" strokeWidth=".8">{pointers.map((p) => <Pointer key={p.join()} at={p} />)}</g>
        <path d="M1115.500 609.500v16l3.500-3.500 2.500 6 2.500-1-2.500-6h5z" fill="#fff" stroke="#000" />
      </Overlay>
      <Watermark>CSDN @AI世纪</Watermark>
      <Meter />
    </Shell>
  );
}
